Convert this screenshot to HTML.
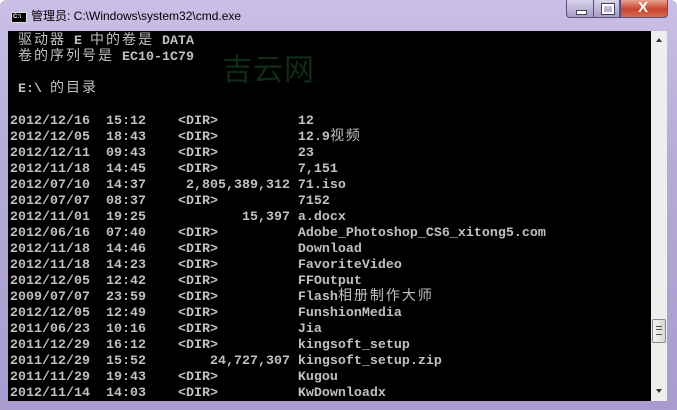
<!DOCTYPE html>
<html><head><meta charset="utf-8"><style>
body{margin:0;width:677px;height:410px;overflow:hidden;background:#fff}
.win{position:absolute;left:0;top:0;width:677px;height:410px;background:linear-gradient(180deg,#c9bfe6 0%,#b6aad8 40%,#a89bcf 100%);border-radius:6px 6px 0 0}
.title{position:absolute;left:31px;top:7px;font:12px "Liberation Sans","Noto Sans CJK SC",sans-serif;color:#000}
.ico{position:absolute;left:11px;top:12px;width:14px;height:9px;background:#000;border:1px solid #ddd;color:#fff;font:bold 6px "Liberation Sans",sans-serif;line-height:9px;text-indent:1px}
.btn{position:absolute;top:0;height:18px;border:1px solid #5a5080;border-top:none;box-sizing:border-box}
.con{position:absolute;left:8px;top:31px;width:643px;height:370px;background:#000;overflow:hidden}
.sb{position:absolute;left:651px;top:31px;width:16px;height:370px;background:#eeeeee}
.t{position:absolute;left:2px;top:3px;font:bold 13.33px/16px "Liberation Mono",monospace;color:#c0c0c0}
.t div{height:16px;overflow:visible;white-space:pre}
.c{font:14px/16px "Noto Sans CJK SC",sans-serif;font-weight:normal;letter-spacing:2px;vertical-align:top;position:relative;top:-3px}
.wm{position:absolute;left:214px;top:14px;font:30px "Noto Sans CJK SC",sans-serif;color:#0f2c17;letter-spacing:1px}
</style></head><body>
<div class="win">
<div class="ico">C:\</div>
<div class="title">管理员: C:\Windows\system32\cmd.exe</div>
<div class="btn" style="left:566px;width:28px;background:linear-gradient(#d8d2ea,#a79cc8);border-radius:0 0 0 4px"><div style="position:absolute;left:9px;top:10px;width:9px;height:3px;background:#fff;border:1px solid #445"></div></div>
<div class="btn" style="left:593px;width:27px;background:linear-gradient(#d8d2ea,#a79cc8)"><div style="position:absolute;left:8px;top:4px;width:8px;height:6px;border:2px solid #fff;outline:1px solid #445"></div></div>
<div class="btn" style="left:620px;width:48px;background:linear-gradient(#e8a090,#c8442e 55%,#d86a50);border-radius:0 0 4px 0"><div style="position:absolute;left:17px;top:-1px;color:#fff;font:bold 15px 'Liberation Sans',sans-serif">X</div></div>
<div class="con">
<div class="wm">吉云网</div>
<div class="t"><div> <span class="c">驱动器</span> E <span class="c">中的卷是</span> DATA</div><div> <span class="c">卷的序列号是</span> EC10-1C79</div><div> </div><div> E:\ <span class="c">的目录</span></div><div> </div><div>2012/12/16  15:12    &lt;DIR&gt;          12</div><div>2012/12/05  18:43    &lt;DIR&gt;          12.9<span class="c">视频</span></div><div>2012/12/11  09:43    &lt;DIR&gt;          23</div><div>2012/11/18  14:45    &lt;DIR&gt;          7,151</div><div>2012/07/10  14:37     2,805,389,312 71.iso</div><div>2012/07/07  08:37    &lt;DIR&gt;          7152</div><div>2012/11/01  19:25            15,397 a.docx</div><div>2012/06/16  07:40    &lt;DIR&gt;          Adobe_Photoshop_CS6_xitong5.com</div><div>2012/11/18  14:46    &lt;DIR&gt;          Download</div><div>2012/11/18  14:23    &lt;DIR&gt;          FavoriteVideo</div><div>2012/12/05  12:42    &lt;DIR&gt;          FFOutput</div><div>2009/07/07  23:59    &lt;DIR&gt;          Flash<span class="c">相册制作大师</span></div><div>2012/12/05  12:49    &lt;DIR&gt;          FunshionMedia</div><div>2011/06/23  10:16    &lt;DIR&gt;          Jia</div><div>2011/12/29  16:12    &lt;DIR&gt;          kingsoft_setup</div><div>2011/12/29  15:52        24,727,307 kingsoft_setup.zip</div><div>2011/11/29  19:43    &lt;DIR&gt;          Kugou</div><div>2012/11/14  14:03    &lt;DIR&gt;          KwDownloadx</div></div>
</div>
<div class="sb">
<div style="position:absolute;left:5px;top:7px;border:3px solid transparent;border-bottom:4px solid #333;border-top:none"></div>
<div style="position:absolute;left:1px;top:288px;width:12px;height:22px;border:1px solid #888;border-radius:2px;background:linear-gradient(90deg,#f4f4f4,#d8d8d8)"><div style="position:absolute;left:3px;top:6px;width:6px;height:7px;border-top:1px solid #555;border-bottom:1px solid #555"></div><div style="position:absolute;left:3px;top:9px;width:6px;height:1px;background:#555"></div></div>
<div style="position:absolute;left:5px;top:358px;border:3px solid transparent;border-top:4px solid #333;border-bottom:none"></div>
</div>
</div>
</body></html>
